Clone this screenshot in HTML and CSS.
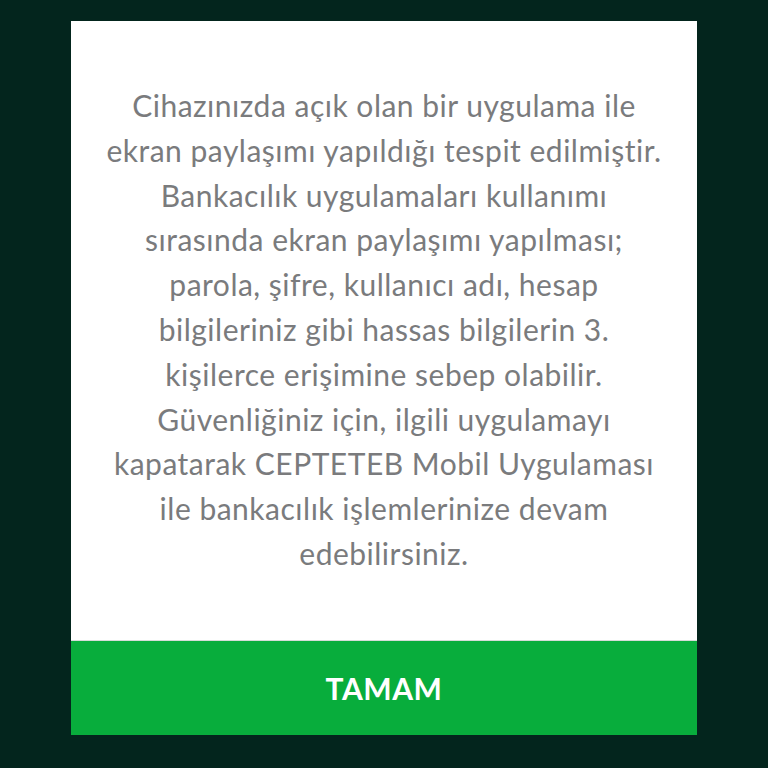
FILE: index.html
```html
<!DOCTYPE html>
<html lang="tr">
<head>
<meta charset="utf-8">
<link rel="stylesheet" href="styles.css">
</head>
<body>
<div class="dialog">
  <div class="message">
    <p>Cihazınızda açık olan bir uygulama ile<br>ekran paylaşımı yapıldığı tespit edilmiştir.<br>Bankacılık uygulamaları kullanımı<br>sırasında ekran paylaşımı yapılması;<br>parola, şifre, kullanıcı adı, hesap<br>bilgileriniz gibi hassas bilgilerin 3.<br>kişilerce erişimine sebep olabilir.<br>Güvenliğiniz için, ilgili uygulamayı<br>kapatarak CEPTETEB Mobil Uygulaması<br>ile bankacılık işlemlerinize devam<br>edebilirsiniz.</p>
  </div>
  <button class="ok">TAMAM</button>
</div>
</body>
</html>
```
FILE: styles.css
```css
html, body {
  margin: 0;
  padding: 0;
  background: #03251d;
  width: 768px;
  height: 768px;
}
body {
  padding-top: 21px;
  box-sizing: border-box;
}
.dialog {
  margin-left: 71px;
  width: 626px;
  height: 714px;
  background: #ffffff;
  display: flex;
  flex-direction: column;
}
.message {
  flex: 1;
  display: flex;
  justify-content: center;
  padding-top: 62px;
  border-bottom: 1px solid #d6dcd8;
}
.message p {
  margin: 0;
  font-family: Lato, "Open Sans", sans-serif;
  font-size: 30px;
  line-height: 44.8px;
  letter-spacing: 0.5px;
  color: #7a7b7d;
  text-align: center;
  white-space: nowrap;
}
.ok {
  height: 94px;
  border: 0;
  margin: 0;
  padding: 0;
  background: #08ad3c;
  color: #ffffff;
  font-family: Lato, "Open Sans", sans-serif;
  font-weight: 700;
  font-size: 30px;
  letter-spacing: 0.5px;
}
```
